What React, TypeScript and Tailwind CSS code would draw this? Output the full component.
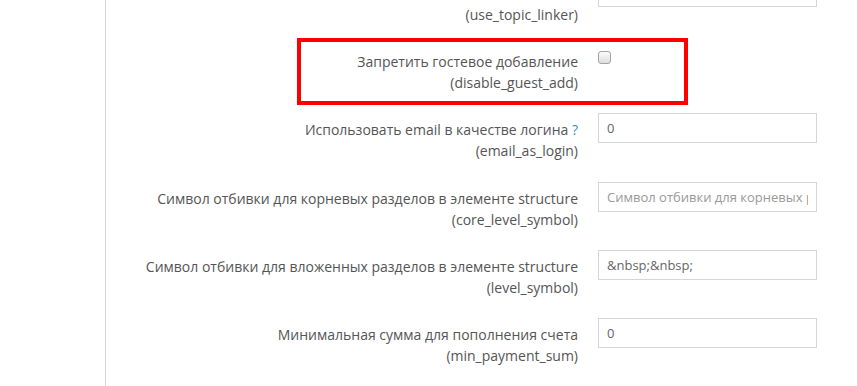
const rows = [
  { title: "Включить связывание тем", key: "use_topic_linker", type: "input", value: "" },
  { title: "Запретить гостевое добавление", key: "disable_guest_add", type: "checkbox" },
  { title: "Использовать email в качестве логина", help: true, key: "email_as_login", type: "input", value: "0" },
  {
    title: "Символ отбивки для корневых разделов в элементе structure",
    key: "core_level_symbol",
    type: "input",
    placeholder: "Символ отбивки для корневых разделов",
  },
  {
    title: "Символ отбивки для вложенных разделов в элементе structure",
    key: "level_symbol",
    type: "input",
    value: "&nbsp;&nbsp;",
  },
  { title: "Минимальная сумма для пополнения счета", key: "min_payment_sum", type: "input", value: "0" },
];

export default function App() {
  return (
    <div
      className="relative flex h-[386px] w-[857px] overflow-hidden bg-white text-[14px] text-[#555]"
      style={{ fontFamily: '"Open Sans", "Liberation Sans", sans-serif' }}
    >
      {/* sidebar */}
      <div className="w-[106px] shrink-0 border-r border-[#cfd8e0]" />

      {/* form */}
      <div className="-mt-[23px] flex flex-col">
        {rows.map((r) => (
          <div key={r.key} className="flex h-[70px] items-start gap-5">
            <div className="w-[472px] pt-[6px] text-right leading-[21px]">
              <div>
                {r.title}
                {r.help && <span className="text-[#3c8dbc]"> ?</span>}
              </div>
              <div>({r.key})</div>
            </div>
            {r.type === "checkbox" ? (
              <span className="mt-[6px] block h-[13px] w-[13px] rounded-[3px] border border-[#a3a3a3] bg-gradient-to-b from-[#fbfbfb] to-[#dedede]" />
            ) : (
              <input
                readOnly
                value={r.value ?? ""}
                placeholder={r.placeholder}
                className="h-[30px] w-[219px] border border-[#d2d6de] px-2 text-[13px] text-[#666] outline-none placeholder:text-[#999]"
                style={{ fontFamily: '"Open Sans", "Liberation Sans", sans-serif' }}
              />
            )}
          </div>
        ))}
      </div>

      {/* highlight */}
      <div className="pointer-events-none absolute left-[297px] top-[38px] h-[67px] w-[391px] border-4 border-[#ff0000]" />
    </div>
  );
}
